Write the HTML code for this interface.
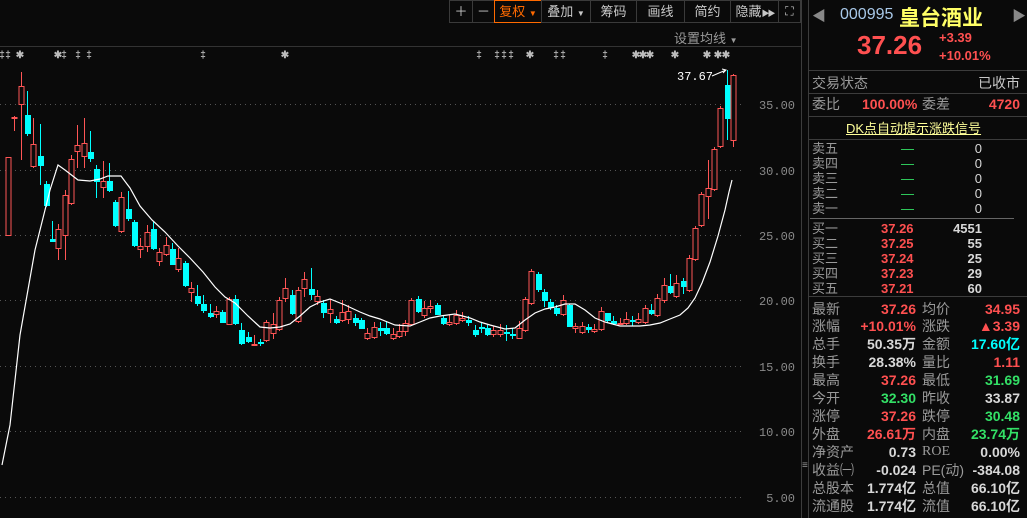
<!DOCTYPE html>
<html><head><meta charset="utf-8"><style>
*{margin:0;padding:0;box-sizing:border-box}
body{width:1027px;height:518px;background:#0a0a0a;overflow:hidden;position:relative;font-family:"Liberation Sans","Noto Sans CJK SC",sans-serif;color:#c8c8c8}
.a{position:absolute;white-space:nowrap}
.tb{position:absolute;top:0;height:23px;border:1px solid #3a3a3a;color:#c8c8c8;font-size:13px;line-height:21px;text-align:center;white-space:nowrap;overflow:hidden}
.hl{position:absolute;left:808px;width:219px;height:1px;background:#3c3c3c}
.r{color:#ff5050}.c{color:#00ffff}.g{color:#33e066}.w{color:#d8d8d8}.y{color:#ffff66}
.row{position:absolute;left:812px;width:210px;height:18px;font-size:14px;line-height:18px}
.row span{position:absolute}
.l1{left:0;color:#9a9a9a}.v1{right:106px;font-weight:bold}.l2{left:110px;color:#9a9a9a}.v2{right:2px;font-weight:bold}
.ob{position:absolute;left:812px;width:170px;height:15px;font-size:13px;line-height:15px}
.ob span{position:absolute}
</style></head><body>
<svg id="ch" class="a" style="left:0;top:0" width="808" height="518"></svg>
<div class="tb" style="left:449px;width:24px">＋</div>
<div class="tb" style="left:472px;width:23px">－</div>
<div class="tb" style="left:494px;width:48px;border-color:#ff6a00;color:#ff6a00">复权 <span style="font-size:8px">▼</span></div>
<div class="tb" style="left:541px;width:50px">叠加 <span style="font-size:8px">▼</span></div>
<div class="tb" style="left:590px;width:47px">筹码</div>
<div class="tb" style="left:636px;width:49px">画线</div>
<div class="tb" style="left:684px;width:47px">简约</div>
<div class="tb" style="left:730px;width:49px">隐藏<span style="font-size:8px;letter-spacing:-2px">▶▶</span></div>
<div class="tb" style="left:778px;width:23px;font-size:12px">⛶</div>
<div class="a" style="left:674px;top:28px;font-size:13px;color:#9a9a9a">设置均线 <span style="font-size:8px">▼</span></div>
<div class="a" style="left:801px;top:0;width:1px;height:518px;background:#3c3c3c"></div>
<div class="a" style="left:808px;top:0;width:1px;height:518px;background:#3c3c3c"></div>
<div class="a" style="left:802px;top:460px;font-size:10px;color:#999">≡</div>
<!-- right panel -->
<div class="a" style="left:812px;top:6px;font-size:14px;color:#888">◀</div>
<div class="a" style="left:1012px;top:6px;font-size:14px;color:#888">▶</div>
<div class="a" style="left:840px;top:6px;font-size:16px;color:#a8c8e8">000995</div>
<div class="a y" style="left:899px;top:2px;font-size:21px;font-weight:bold">皇台酒业</div>
<div class="a r" style="left:857px;top:30px;font-size:26px;font-weight:bold">37.26</div>
<div class="a r" style="left:939px;top:30px;font-size:13px;font-weight:bold">+3.39</div>
<div class="a r" style="left:939px;top:48px;font-size:13px;font-weight:bold">+10.01%</div>
<div class="hl" style="top:70px"></div>
<div class="row" style="top:74px"><span class="l1">交易状态</span><span class="v2" style="color:#c8c8c8;font-weight:normal">已收市</span></div>
<div class="hl" style="top:93px"></div>
<div class="row" style="top:95px"><span class="l1">委比</span><span class="r" style="left:50px;font-weight:bold">100.00%</span><span class="l2">委差</span><span class="v2 r">4720</span></div>
<div class="hl" style="top:116px"></div>
<div class="a" style="left:846px;top:118px;font-size:13px;color:#ffff99;text-decoration:underline">DK点自动提示涨跌信号</div>
<div class="hl" style="top:139px"></div>
<div class="ob" style="top:141px"><span class="l1" style="left:0">卖五</span><span class="g" style="left:89px">—</span><span class="w" style="right:0">0</span></div>
<div class="ob" style="top:156px"><span class="l1" style="left:0">卖四</span><span class="g" style="left:89px">—</span><span class="w" style="right:0">0</span></div>
<div class="ob" style="top:171px"><span class="l1" style="left:0">卖三</span><span class="g" style="left:89px">—</span><span class="w" style="right:0">0</span></div>
<div class="ob" style="top:186px"><span class="l1" style="left:0">卖二</span><span class="g" style="left:89px">—</span><span class="w" style="right:0">0</span></div>
<div class="ob" style="top:201px"><span class="l1" style="left:0">卖一</span><span class="g" style="left:89px">—</span><span class="w" style="right:0">0</span></div>
<div class="a" style="left:810px;top:218px;width:204px;height:1px;background:#666"></div>
<div class="ob" style="top:221px"><span class="l1" style="left:0">买一</span><span class="r" style="left:69px;font-weight:bold">37.26</span><span class="w" style="right:0;font-weight:bold">4551</span></div>
<div class="ob" style="top:236px"><span class="l1" style="left:0">买二</span><span class="r" style="left:69px;font-weight:bold">37.25</span><span class="w" style="right:0;font-weight:bold">55</span></div>
<div class="ob" style="top:251px"><span class="l1" style="left:0">买三</span><span class="r" style="left:69px;font-weight:bold">37.24</span><span class="w" style="right:0;font-weight:bold">25</span></div>
<div class="ob" style="top:266px"><span class="l1" style="left:0">买四</span><span class="r" style="left:69px;font-weight:bold">37.23</span><span class="w" style="right:0;font-weight:bold">29</span></div>
<div class="ob" style="top:281px"><span class="l1" style="left:0">买五</span><span class="r" style="left:69px;font-weight:bold">37.21</span><span class="w" style="right:0;font-weight:bold">60</span></div>
<div class="hl" style="top:296px"></div>
<div class="row" style="top:300px"><span class="l1">最新</span><span class="v1 r">37.26</span><span class="l2">均价</span><span class="v2 r">34.95</span></div>
<div class="row" style="top:317px"><span class="l1">涨幅</span><span class="v1 r">+10.01%</span><span class="l2">涨跌</span><span class="v2 r">▲3.39</span></div>
<div class="row" style="top:335px"><span class="l1">总手</span><span class="v1 w">50.35万</span><span class="l2">金额</span><span class="v2 c">17.60亿</span></div>
<div class="row" style="top:353px"><span class="l1">换手</span><span class="v1 w">28.38%</span><span class="l2">量比</span><span class="v2 r">1.11</span></div>
<div class="row" style="top:371px"><span class="l1">最高</span><span class="v1 r">37.26</span><span class="l2">最低</span><span class="v2 g">31.69</span></div>
<div class="row" style="top:389px"><span class="l1">今开</span><span class="v1 g">32.30</span><span class="l2">昨收</span><span class="v2 w">33.87</span></div>
<div class="row" style="top:407px"><span class="l1">涨停</span><span class="v1 r">37.26</span><span class="l2">跌停</span><span class="v2 g">30.48</span></div>
<div class="row" style="top:425px"><span class="l1">外盘</span><span class="v1 r">26.61万</span><span class="l2">内盘</span><span class="v2 g">23.74万</span></div>
<div class="row" style="top:443px"><span class="l1">净资产</span><span class="v1 w">0.73</span><span class="l2" style="font-family:'Liberation Serif',serif">ROE</span><span class="v2 w">0.00%</span></div>
<div class="row" style="top:461px"><span class="l1">收益㈠</span><span class="v1 w">-0.024</span><span class="l2">PE(动)</span><span class="v2 w">-384.08</span></div>
<div class="row" style="top:479px"><span class="l1">总股本</span><span class="v1 w">1.774亿</span><span class="l2">总值</span><span class="v2 w">66.10亿</span></div>
<div class="row" style="top:497px"><span class="l1">流通股</span><span class="v1 w">1.774亿</span><span class="l2">流值</span><span class="v2 w">66.10亿</span></div>
<script>
var s='';
s+='<line x1="0" y1="46.5" x2="801" y2="46.5" stroke="#333"/>';
var labs=[[104,'35.00'],[170,'30.00'],[235,'25.00'],[300,'20.00'],[366,'15.00'],[431,'10.00'],[497,'5.00']];
labs.forEach(function(l){s+='<line x1="0" y1="'+l[0]+'.5" x2="742" y2="'+l[0]+'.5" stroke="#555" stroke-dasharray="1,4"/>';
s+='<text x="795" y="'+(l[0]+5)+'" fill="#8a8a8a" font-size="12" text-anchor="end" font-family="Liberation Mono,monospace">'+l[1]+'</text>';});
var d=[[157,235,'r'],[117,118,'r',116,131],[86,104,'r',72,160],[115,133,'c',91,136],[144,166,'r',118,168],[156,165,'c',124,185],[184,205,'c',181,207],[239,241,'c',221,241],[229,248,'r',224,260],[195,235,'r',190,260],[159,203,'r',155,205],[145,151,'r',125,168],[143,156,'r',118,168],[152,158,'c',131,162],[169,181,'c',165,198],[181,187,'r',161,198],[181,190,'c',163,192],[202,225,'c',200,227],[197,231,'r',192,233],[209,218,'c',191,221],[222,245,'c',220,247],[246,249,'r',238,258],[232,246,'r',225,252],[229,248,'c',222,250],[252,261,'r',248,266],[245,254,'r',237,256],[249,264,'c',243,265],[258,269,'r',248,272],[263,285,'c',261,287],[288,292,'r',282,302],[296,303,'c',285,306],[304,310,'c',295,313],[313,316,'c',304,318],[311,314,'r',306,318],[312,322,'c',310,323],[299,324,'r',297,325],[299,323,'c',295,325],[330,343,'c',323,345],[337,341,'c',332,343],[344,345,'r',335,345],[342,343,'c',339,346],[322,340,'r',320,342],
[324,333,'r',313,339],[300,329,'r',297,331],[288,298,'r',278,302],[295,313,'c',290,315],[290,321,'r',287,323],[279,288,'r',272,297],[289,294,'c',268,300],[296,301,'r',290,305],[303,312,'c',300,318],[309,313,'r',299,323],[319,322,'c',316,324],[312,320,'r',300,322],[311,319,'r',305,324],[318,322,'c',314,326],[320,328,'c',318,329],[333,338,'r',328,340],[327,337,'r',322,339],[328,330,'c',322,336],[328,333,'c',321,335],[334,338,'r',328,340],[331,336,'r',324,338],[323,331,'r',320,336],[300,324,'r',298,326],[299,311,'c',296,313],[308,315,'r',301,318],[306,308,'r',300,313],[305,314,'c',303,315],[318,323,'c',315,325],[322,324,'r',315,326],[315,323,'r',310,325],[318,320,'r',312,322],[320,322,'c',316,326],[330,334,'c',325,337],[327,328,'c',323,333],[328,334,'c',325,336],[330,334,'r',326,337],[330,334,'r',324,337],[332,333,'c',325,341],[334,335,'c',328,339],[328,338,'r',321,339],[299,330,'r',297,332],
[271,303,'r',269,305],[274,289,'c',272,292],[292,300,'c',289,307],[302,307,'c',299,310],[308,313,'c',305,316],[300,314,'r',295,316],[305,326,'c',304,327],[326,328,'r',323,333],[326,332,'r',322,334],[327,329,'c',324,333],[329,331,'r',324,333],[311,329,'r',307,331],[313,320,'c',313,322],[321,323,'c',316,325],[323,324,'r',318,325],[319,323,'r',312,325],[320,321,'c',316,326],[319,322,'r',313,324],[308,322,'r',305,324],[310,313,'c',304,315],[298,315,'r',294,317],[285,300,'r',278,303],[286,292,'c',274,294],[283,296,'r',275,298],[281,286,'c',278,294],[258,290,'r',255,292],[228,259,'r',226,261],[194,225,'r',192,227],[188,196,'r',160,219],[149,189,'r',147,191],[108,146,'r',106,148],[85,118,'c',70,140],[75,140,'r',74,147]];
var n=d.length,step=(733-8)/(n-1);
d.forEach(function(c,i){var x=Math.round(8+i*step),col=c[2]=='r'?'#ff5555':'#00ffff';
var wt=c[3]||c[0],wb=c[4]||c[1];
s+='<line x1="'+(x+0.5)+'" y1="'+wt+'" x2="'+(x+0.5)+'" y2="'+wb+'" stroke="'+col+'"/>';
var h=Math.max(1,c[1]-c[0]);
if(c[2]=='r')s+='<rect x="'+(x-2)+'" y="'+c[0]+'.5" width="5" height="'+h+'" fill="#0a0a0a" stroke="'+col+'"/>';
else s+='<rect x="'+(x-2)+'" y="'+c[0]+'" width="6" height="'+(h+1)+'" fill="'+col+'"/>';});
var ma=[[2,465],[10,425],[20,335],[35,250],[50,190],[58,165],[65,170],[78,180],[90,181],[100,179],[108,176],[121,176],[130,188],[140,206],[152,220],[165,232],[178,246],[190,258],[203,272],[215,287],[225,297],[235,303],[248,316],[260,327],[270,328],[280,327],[290,324],[300,316],[310,307],[320,302],[330,299],[345,305],[360,312],[370,316],[380,319],[395,325],[410,326],[420,322],[430,318],[440,316],[455,314],[470,318],[480,322],[490,325],[505,329],[515,328],[525,320],[535,313],[545,309],[555,307],[565,304],[575,304],[585,310],[595,318],[605,322],[620,326],[640,326],[650,325],[660,323],[670,319],[680,315],[688,308],[695,298],[702,283],[710,262],[718,236],[725,210],[729,192],[732,180]];
s+='<polyline fill="none" stroke="#ffffff" stroke-width="1.2" points="'+ma.map(function(p){return p.join(',')}).join(' ')+'"/>';
var mk=[[2,'‡'],[8,'‡'],[20,'✱'],[58,'✱'],[64,'‡'],[78,'‡'],[89,'‡'],[203,'‡'],[285,'✱'],[479,'‡'],[497,'‡'],[504,'‡'],[511,'‡'],[530,'✱'],[556,'‡'],[563,'‡'],[605,'‡'],[636,'✱'],[643,'✱'],[650,'✱'],[675,'✱'],[707,'✱'],[718,'✱'],[726,'✱']];
mk.forEach(function(m){s+='<text x="'+m[0]+'" y="58" fill="#bbb" font-size="10" font-weight="bold" text-anchor="middle">'+m[1]+'</text>';});
s+='<text x="677" y="80" fill="#fff" font-size="12" font-family="Liberation Mono,monospace">37.67</text>';
s+='<path d="M712 76 L726 70 M722 69 L726 70 L723 73" stroke="#fff" fill="none"/>';
document.getElementById('ch').innerHTML=s;
</script>
</body></html>
